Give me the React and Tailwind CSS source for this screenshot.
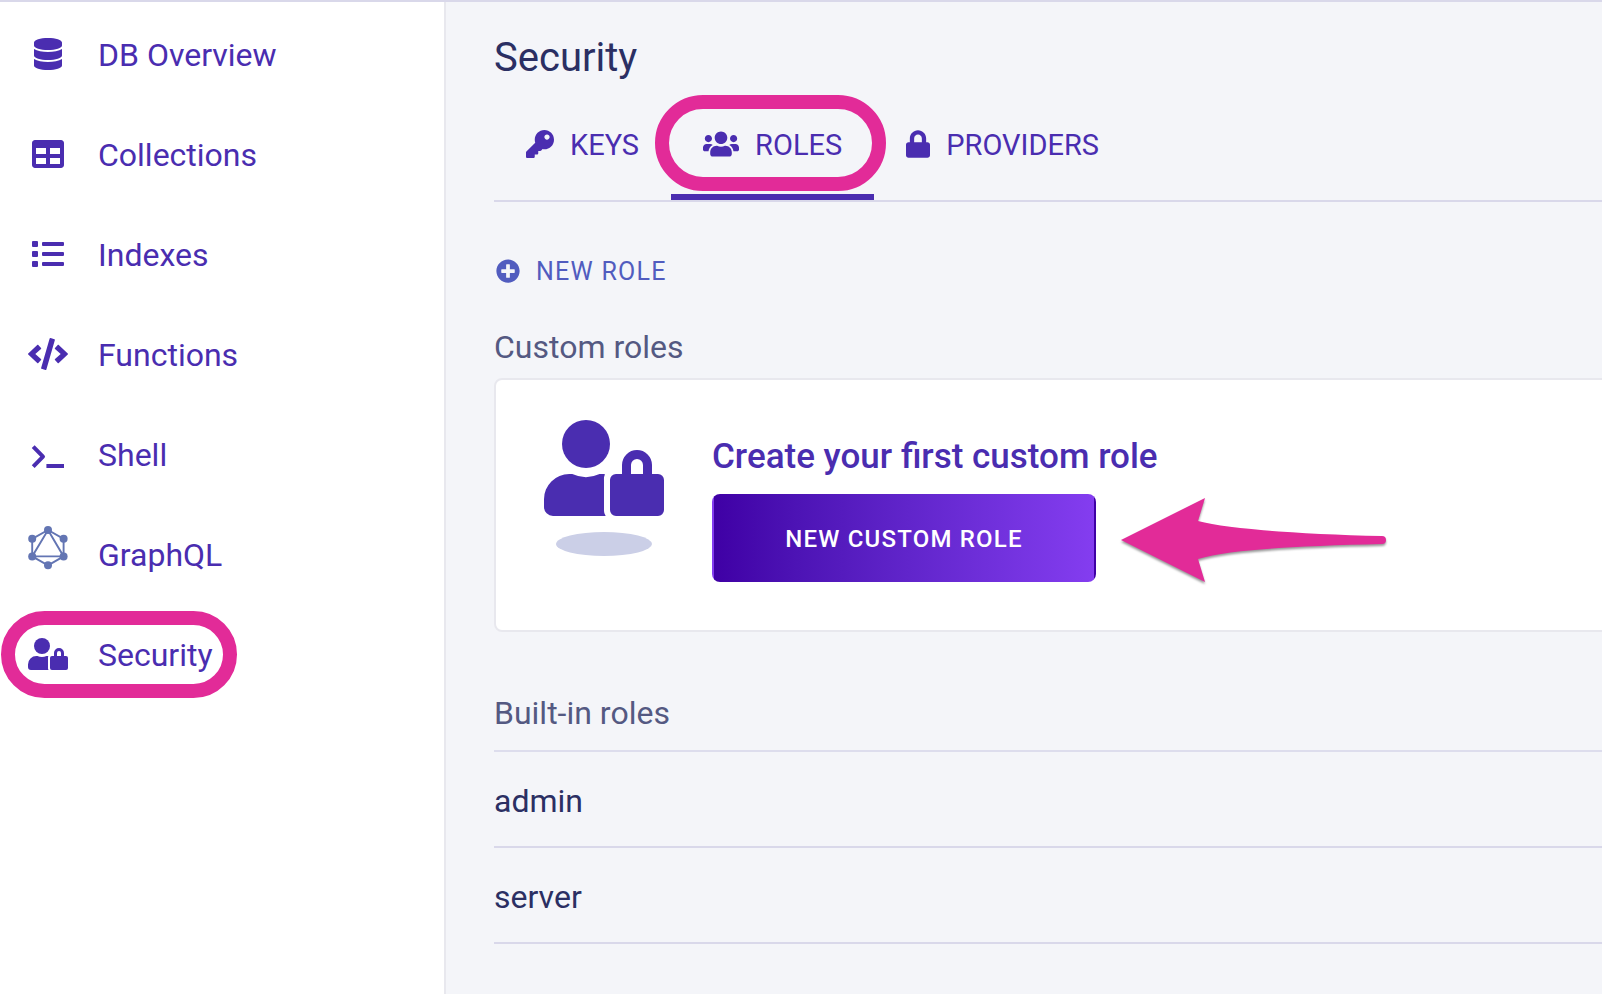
import { FaDatabase, FaTable, FaList, FaCode, FaKey, FaUsers, FaLock, FaPlusCircle } from "react-icons/fa";

function TerminalIcon() {
  return (
    <svg width="40" height="32" viewBox="0 0 40 32" aria-hidden="true" fill="none" stroke="currentColor" strokeLinejoin="round">
      <path d="M5.200 8.600 15 18.600 5.200 28.600" strokeWidth="4" />
      <path d="M18.400 28H36" strokeWidth="4" />
    </svg>
  );
}

function GraphIcon() {
  const nodes = [[20, 4], [4.2, 12.8], [35.6, 12.8], [4.2, 30.4], [35.6, 30.4], [20, 39.3]];
  return (
    <svg width="40" height="44" viewBox="0 0 40 44" aria-hidden="true" className="text-[#6375b3]">
      <path d="M20 4 35.6 12.8V30.4L20 39.3 4.2 30.4V12.8ZM20 4 35.6 30.4H4.2Z" fill="none" stroke="currentColor" strokeWidth="1.9" />
      {nodes.map(([x, y]) => (
        <circle key={`${x}-${y}`} cx={x} cy={y} r="4" fill="currentColor" />
      ))}
    </svg>
  );
}

function UserLockIcon({ className }) {
  return (
    <svg viewBox="0 0 640 512" fill="currentColor" aria-hidden="true" className={className}>
      <circle cx="224" cy="128" r="128" />
      <path d="M320 320a64 64 0 0 1 5-31c-4-1-8-1-12-1h-16.7a174 174 0 0 1-145.600 0H134.400A134.400 134.400 0 0 0 0 422.400V464a48 48 0 0 0 48 48h280.900a47.500 47.500 0 0 1-8.900-32Z" />
      <path fillRule="evenodd" d="M608 288h-32v-48a80 80 0 0 0-160 0v48h-32a32 32 0 0 0-32 32v160a32 32 0 0 0 32 32h224a32 32 0 0 0 32-32V320a32 32 0 0 0-32-32ZM464 240a32 32 0 0 1 64 0v48h-64Z" />
    </svg>
  );
}

function Arrow() {
  return (
    <svg width="270" height="84" viewBox="0 2 270 84" aria-hidden="true" className="mt-1 overflow-visible drop-shadow-[0_2px_1px_rgba(0,0,0,0.4)]">
      <path d="M1 44 85 2 78 25C108 33 180 38 262 40a4 4 0 0 1 0 8C180 50 110 53 78 63L85 86Z" fill="#e22b98" />
    </svg>
  );
}

const navItems = [
  { label: "DB Overview", icon: <FaDatabase size={32} /> },
  { label: "Collections", icon: <FaTable size={32} /> },
  { label: "Indexes", icon: <FaList size={32} /> },
  { label: "Functions", icon: <FaCode className="h-8 w-10" /> },
  { label: "Shell", icon: <TerminalIcon /> },
  { label: "GraphQL", icon: <GraphIcon />, raised: true },
  { label: "Security", icon: <UserLockIcon className="h-8 w-10" />, marked: true },
];

const tabs = [
  { label: "KEYS", icon: <FaKey size={28} /> },
  { label: "ROLES", icon: <FaUsers size={36} />, active: true },
  { label: "PROVIDERS", icon: <FaLock className="h-7 w-6" /> },
];

export default function App() {
  return (
    <div className="flex min-h-screen overflow-hidden border-t-2 border-[#d9d8ea] bg-[#f4f5f9] font-[Roboto,sans-serif] text-[32px] leading-10 text-[#2b2f63]">
      <nav aria-label="Database" className="w-[446px] shrink-0 border-r-2 border-[#e8e8ee] bg-white pt-[3px] text-[#4a2db0]">
        <ul>
          {navItems.map(({ label, icon, raised, marked }) => (
            <li key={label} className="relative">
              <a href="#" className="flex h-25 items-center gap-[30px] pl-7">
                <span className={raised ? "flex w-10 justify-center pb-[14px]" : "flex w-10 justify-center pb-[2px]"}>{icon}</span>
                {label}
              </a>
              {marked && (
                <span className="pointer-events-none absolute top-[6px] left-px h-[87px] w-[236px] rounded-full border-14 border-[#e22b98]" />
              )}
            </li>
          ))}
        </ul>
      </nav>

      <main className="min-w-0 flex-1 pl-12">
        <h1 className="pt-[30px] text-[40px] leading-[52px]">Security</h1>

        <div role="tablist" className="mt-2 flex h-[110px] border-b-2 border-[#d9d8ea] text-[29px] text-[#4a2db0]">
          {tabs.map(({ label, icon, active }) => (
            <button
              key={label}
              type="button"
              role="tab"
              aria-selected={!!active}
              className={
                active
                  ? "relative flex items-center gap-4 border-b-6 border-[#4a2db0] px-8 pt-1"
                  : "relative flex items-center gap-4 border-b-6 border-transparent px-8 pt-1"
              }
            >
              <span className="pb-[2px]">{icon}</span>
              {label}
              {active && (
                <span className="pointer-events-none absolute top-[3px] -right-3 -left-4 h-24 rounded-[48px] border-14 border-[#e22b98]" />
              )}
            </button>
          ))}
        </div>

        <button type="button" className="mt-[49px] flex items-center gap-4 text-[25px] tracking-wider text-[#515cbf]">
          <FaPlusCircle size={24} className="ml-[2px]" />
          <span className="pt-[2px] leading-[38px]">NEW ROLE</span>
        </button>

        <section>
          <h2 className="mt-9 text-[#545982]">Custom roles</h2>
          <div className="mt-[11px] -mr-2 flex h-[254px] gap-12 rounded-lg border-2 border-[#e8e8ee] bg-white pl-12">
            <div className="flex w-30 flex-col items-center pt-10 text-[#4a2db0]">
              <UserLockIcon className="h-24 w-30" />
              <span className="mt-4 h-6 w-24 rounded-[50%] bg-[#cbcfe7]" />
            </div>
            <div className="pt-[57px]">
              <h3 className="text-[35px] font-medium text-[#4a2db0]">Create your first custom role</h3>
              <div className="mt-[17px] flex items-center gap-6">
                <button type="button" className="h-[88px] w-96 rounded-lg border-x-2 border-transparent bg-linear-to-r from-[#3f00a5] to-[#843df0] pt-[2px] text-[24px] font-medium tracking-wider text-white">
                  NEW CUSTOM ROLE
                </button>
                <Arrow />
              </div>
            </div>
          </div>
        </section>

        <section>
          <h2 className="mt-[61px] text-[#545982]">Built-in roles</h2>
          <ul className="mt-[17px] border-t-2 border-[#dddded]">
            {["admin", "server"].map((role) => (
              <li key={role} className="flex h-24 items-center border-b-2 border-[#d9d8ea] pt-1">
                {role}
              </li>
            ))}
          </ul>
        </section>
      </main>
    </div>
  );
}
